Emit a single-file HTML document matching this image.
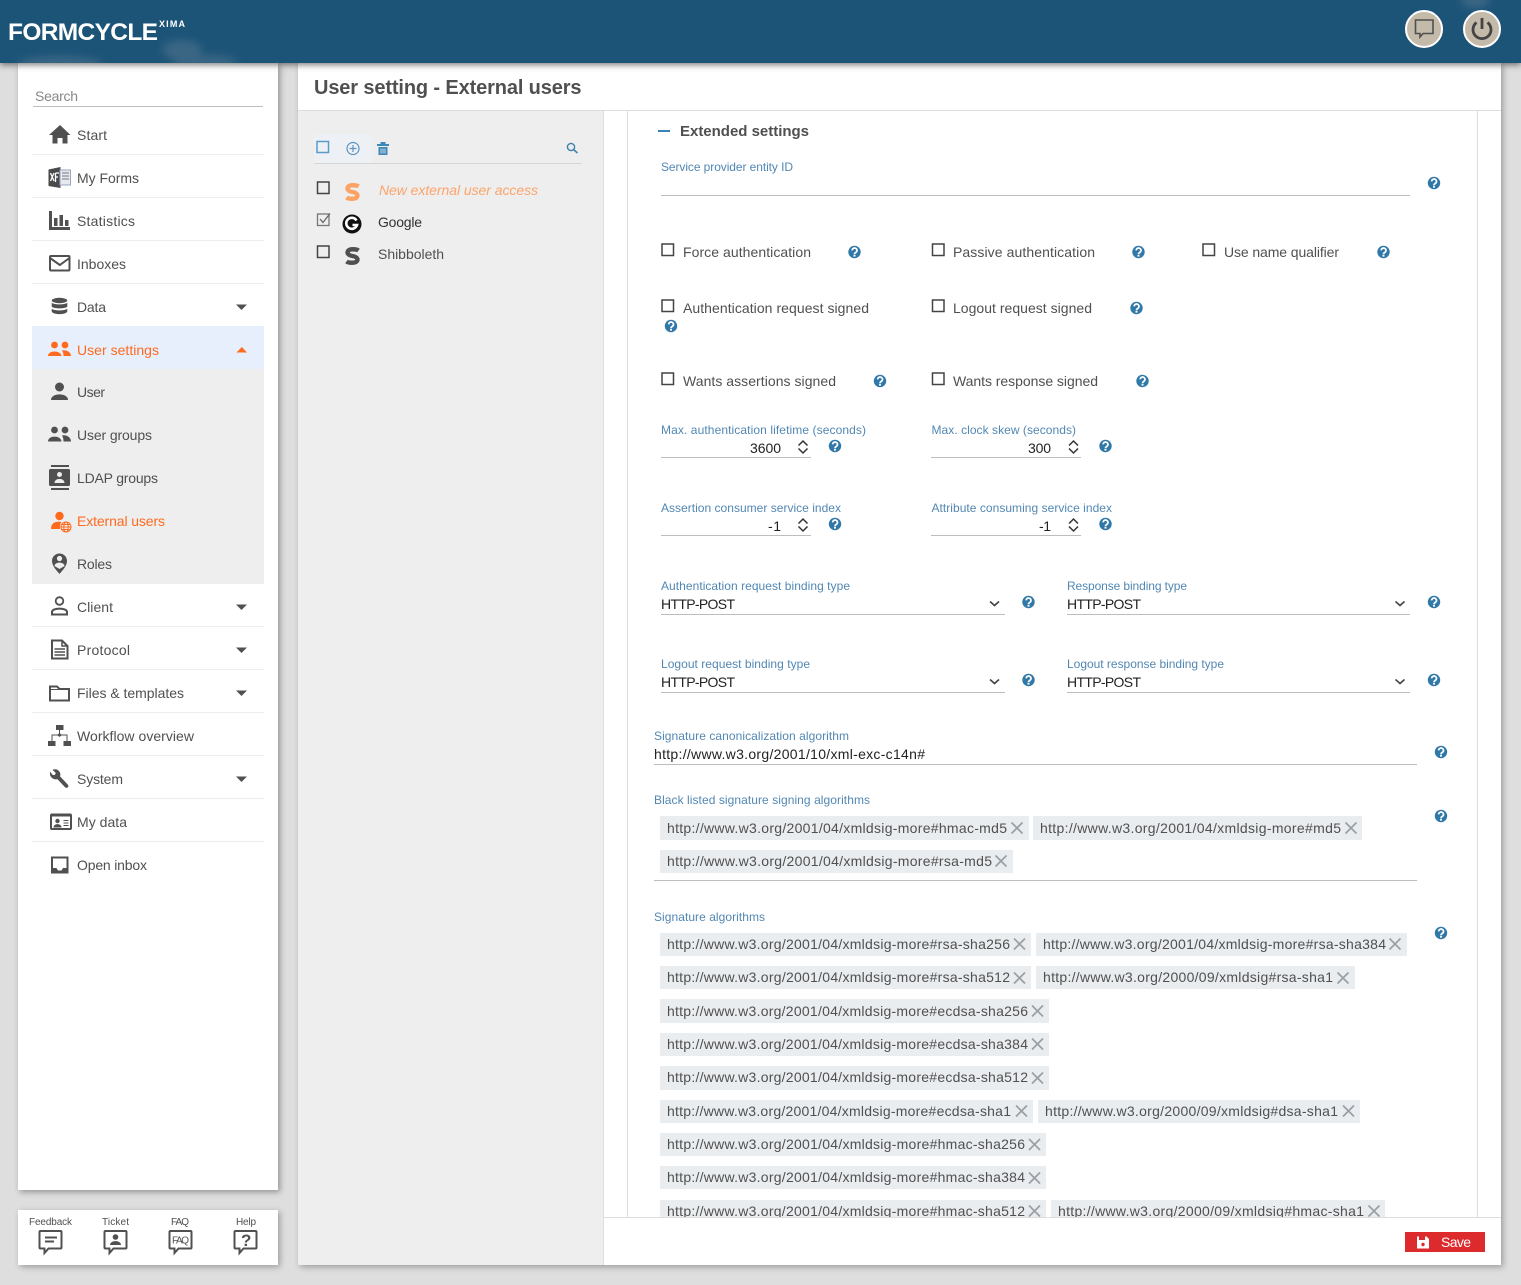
<!DOCTYPE html>
<html lang="en"><head><meta charset="utf-8"><title>User setting - External users</title>
<style>
html,body{margin:0;padding:0;width:1521px;height:1285px;overflow:hidden;background:#dedede}
.b{position:absolute}
svg{position:absolute;left:0;top:0}
text{font-family:"Liberation Sans",Arial,sans-serif;font-size:14px;fill:#505050}
.l{font-size:12px;fill:#5287b3}
.v{fill:#222}
.o{fill:#ff6a1f}
.chip{fill:#eaedf0}
.x{stroke:#98a0a6;stroke-width:1.7;fill:none}
.cb{fill:none;stroke:#444;stroke-width:1.5}
.sp{fill:none;stroke:#333;stroke-width:1.5}
.ln{fill:#bdbdbd}
.sep{fill:#ececec}
.ic{fill:#505050}
.is{fill:none;stroke:#505050;stroke-width:2}
.s10{font-size:10px}
</style></head><body>
<div class="b" style="left:18px;top:63px;width:260px;height:1127px;background:#fff;box-shadow:2px 2px 6px rgba(0,0,0,.35)"></div>
<div class="b" style="left:18px;top:1210px;width:260px;height:55px;background:#fff;box-shadow:2px 2px 6px rgba(0,0,0,.3)"></div>
<div class="b" style="left:298px;top:63px;width:1203px;height:1202px;background:#fff;box-shadow:2px 2px 6px rgba(0,0,0,.3)"></div>
<div class="b" style="left:0;top:0;width:1521px;height:63px;background:#1c5478;box-shadow:0 2px 6px rgba(0,0,0,.5)"></div>
<svg width="1521" height="1285" viewBox="0 0 1521 1285" xmlns="http://www.w3.org/2000/svg">
<defs>
<filter id="bl" x="-50%" y="-50%" width="200%" height="200%"><feGaussianBlur stdDeviation="4"/></filter>
<clipPath id="hc"><rect width="1521" height="63"/></clipPath>
<g id="h"><circle r="6.2" fill="#2f78a8"/><path d="M-2.3-1.6a2.4 2.3 0 1 1 3.7 1.9C.5.9 0 1.2 0 2.1" fill="none" stroke="#fff" stroke-width="1.7"/><rect x="-1" y="2.8" width="2" height="1.8" fill="#fff"/></g>
<path id="sp" d="M-4.500-2 0-6.500 4.500-2M-4.500 1 0 5.500 4.500 1" class="sp"/>
<path id="cv" d="M-4.500-2 0 2 4.500-2" fill="none" stroke="#444" stroke-width="1.6"/>
<path id="xx" d="M-5.500-5.500 5.500 5.500M5.500-5.500-5.500 5.500" class="x"/>
<path id="tr" d="M-5.500-2.500H5.500L0 3Z" fill="#505050"/>
<path id="bub" d="M-10-.5H10a1 1 0 0 1 1 1V16a1 1 0 0 1-1 1H-2L-6 21.500V17H-10a1 1 0 0 1-1-1V.5a1 1 0 0 1 1-1Z" fill="none" stroke="#505050" stroke-width="2"/>
<path id="ss" d="M6-5.500C4-7-3-7.500-4.500-5-6-2.500-3.500-.5 0 0 3.500 .5 6 2.500 4.500 5 3 7.500-4 7-6 5.500" fill="none" stroke-width="4.400"/>
</defs>

<!-- header -->
<g clip-path="url(#hc)"><g filter="url(#bl)" fill="#a5a5ad" opacity=".22"><ellipse cx="60" cy="64" rx="42" ry="8"/><ellipse cx="182" cy="50" rx="20" ry="10"/><ellipse cx="205" cy="62" rx="32" ry="7"/><ellipse cx="1475" cy="0" rx="15" ry="8"/></g></g>
<text x="8" y="40" textLength="150" style="font-size:24.5px;fill:#fff;font-weight:700">FORMCYCLE</text>
<text x="159" y="27" textLength="26" style="font-size:9px;fill:#fff;font-weight:700">XIMA</text>
<circle cx="1424" cy="29" r="18" fill="#c3baa9" stroke="#fff" stroke-width="2"/>
<path d="M1415.500 20H1433V33.500H1423L1420 37V33.500H1415.500Z" fill="none" stroke="#505050" stroke-width="1.600"/>
<circle cx="1482" cy="29" r="18" fill="#c3baa9" stroke="#fff" stroke-width="2"/>
<path d="M1476.500 22.500a9 9 0 1 0 11 0M1482 18V29" fill="none" stroke="#444" stroke-width="2.800"/>

<!-- sidebar -->
<text x="35" y="101" textLength="43" style="fill:#888">Search</text>
<rect x="33" y="106" width="230" height="1" class="ln"/>
<rect x="32" y="154" width="232" height="1" class="sep"/><rect x="32" y="197" width="232" height="1" class="sep"/><rect x="32" y="240" width="232" height="1" class="sep"/><rect x="32" y="283" width="232" height="1" class="sep"/>
<rect x="32" y="326" width="232" height="43" fill="#e8effc"/>
<rect x="32" y="369" width="232" height="215" fill="#eee"/>
<rect x="32" y="626" width="232" height="1" class="sep"/><rect x="32" y="669" width="232" height="1" class="sep"/><rect x="32" y="712" width="232" height="1" class="sep"/><rect x="32" y="755" width="232" height="1" class="sep"/><rect x="32" y="798" width="232" height="1" class="sep"/><rect x="32" y="841" width="232" height="1" class="sep"/>

<text x="77" y="140" textLength="30">Start</text>
<text x="77" y="183" textLength="62">My Forms</text>
<text x="77" y="226" textLength="58">Statistics</text>
<text x="77" y="269" textLength="49">Inboxes</text>
<text x="77" y="312" textLength="29">Data</text>
<text x="77" y="355" textLength="82" class="o">User settings</text>
<text x="77" y="397" textLength="28">User</text>
<text x="77" y="440" textLength="75">User groups</text>
<text x="77" y="483" textLength="81">LDAP groups</text>
<text x="77" y="526" textLength="88" class="o">External users</text>
<text x="77" y="569" textLength="35">Roles</text>
<text x="77" y="612" textLength="36">Client</text>
<text x="77" y="655" textLength="53">Protocol</text>
<text x="77" y="698" textLength="107">Files &amp; templates</text>
<text x="77" y="741" textLength="117">Workflow overview</text>
<text x="77" y="784" textLength="46">System</text>
<text x="77" y="827" textLength="50">My data</text>
<text x="77" y="870" textLength="70">Open inbox</text>

<use href="#tr" x="241.500" y="307"/><use href="#tr" x="241.500" y="607"/><use href="#tr" x="241.500" y="650"/><use href="#tr" x="241.500" y="693"/><use href="#tr" x="241.500" y="779"/>
<path d="M236.500 352.500H247L241.800 347Z" fill="#ff6a1f"/>

<!-- home -->
<path d="M49 135 60 125 70.500 135H67.500V143.500H62.500V138H57.500V143.500H52.500V135Z" class="ic"/>
<!-- my forms -->
<path d="M48.500 169.500 60.500 167V188L48.500 186Z" fill="#4a4a4a"/><rect x="60" y="170" width="10.500" height="15" fill="#e6e9f0" stroke="#9aa6c0"/><path d="M62 173H69M62 176H69M62 179H69" stroke="#777"/><path d="M50.500 173 54 181M54 173 50.500 181M55.500 173V182M55.500 173H59M55.500 177H58" stroke="#fff" stroke-width="1.300" fill="none"/>
<!-- stats -->
<path d="M49 211H52V227H70V230H49Z" class="ic"/><rect x="54" y="218" width="3.500" height="8" class="ic"/><rect x="59.500" y="215" width="3.500" height="11" class="ic"/><rect x="65" y="220" width="3.500" height="6" class="ic"/>
<!-- inbox -->
<rect x="50" y="256" width="19.500" height="14.500" rx="1" class="is"/><path d="M50 258 59.800 265 69.500 258" class="is"/>
<!-- data -->
<g class="ic"><ellipse cx="59.500" cy="300.500" rx="7.800" ry="2.700"/><path d="M51.700 302.500C53 305 66 305 67.300 302.500V306.500C66 309 53 309 51.700 306.500Z"/><path d="M51.700 308.500C53 311 66 311 67.300 308.500V311.500C66 315 53 315 51.700 311.500Z"/></g>
<!-- user settings -->
<g fill="#ff6a1f"><circle cx="54.500" cy="345" r="3.400"/><circle cx="65" cy="345" r="3.400"/><path d="M48 356C48 350 61 350 61.500 356ZM62 350.500C66 349.500 71 352 71 356H63.500C63.500 353.500 63 352 62 350.500Z"/></g>
<!-- user -->
<g class="ic"><circle cx="59.500" cy="387" r="4.500"/><path d="M51 400C51 392.500 68 392.500 68 400Z"/></g>
<!-- groups -->
<g class="ic"><circle cx="54.500" cy="430" r="3.400"/><circle cx="65" cy="430" r="3.400"/><path d="M48 441.500C48 435 61 435 61.500 441.500ZM62 435.500C66 434.500 71 437 71 441.500H63.500C63.500 439 63 437 62 435.500Z"/></g>
<!-- ldap -->
<rect x="51" y="465" width="18" height="2" class="ic"/><rect x="51" y="488" width="18" height="2" class="ic"/><rect x="49" y="469" width="21" height="17" rx="1.500" class="ic"/><circle cx="59.500" cy="474.500" r="2.500" fill="#eee"/><path d="M54.500 483C54.500 477.500 64.500 477.500 64.500 483Z" fill="#eee"/>
<!-- external -->
<g fill="#ff6a1f"><circle cx="59.500" cy="516" r="4.200"/><path d="M51 529C51 522 57 521 61.500 522 60 524 60 526 60 529Z"/></g><g fill="none" stroke="#ff6a1f" stroke-width="1"><circle cx="66" cy="527" r="5"/><ellipse cx="66" cy="527" rx="2.200" ry="5"/><path d="M61 527H71M61.800 524.500H70.200M61.800 529.500H70.200"/></g>
<!-- roles -->
<path d="M59.500 553.500C64 553.500 67 557 67 561 67 566 62 571 59.500 574 57 571 52 566 52 561 52 557 55 553.500 59.500 553.500Z" class="ic"/><circle cx="59.500" cy="558.500" r="2.600" fill="#eee"/><path d="M54.500 566C54.500 561.500 64.500 561.500 64.500 566L59.500 569Z" fill="#eee"/>
<!-- client -->
<circle cx="59.500" cy="601" r="3.800" class="is" style="stroke-width:1.800"/><path d="M52 614.500V612C52 607.500 67 607.500 67 612V614.500Z" class="is"/>
<!-- protocol -->
<path d="M52 640.500H62L67.500 646V658.500H52Z" class="is"/><path d="M62 640.500V646H67.500" class="is" style="stroke-width:1.500"/><path d="M54.500 649H65M54.500 652H65M54.500 655H65" stroke="#505050" stroke-width="1.500"/>
<!-- files -->
<path d="M50 700.500V686.500H57L59.500 689H69V700.500Z" class="is"/><path d="M50 689.500H59" stroke="#505050"/>
<!-- workflow -->
<g class="ic"><rect x="56" y="725" width="7.500" height="5"/><rect x="48" y="741" width="7.500" height="5"/><rect x="63.500" y="741" width="7.500" height="5"/><path d="M59 730H60V734.500H67.500V741H66.500V735.500H52.500V741H51.500V734.500H59Z"/><path d="M59.500 733 62 735 59.500 737 57 735Z"/></g>
<!-- system wrench -->
<path d="M50.500 773C50 776.500 53.500 780 57.500 778.500L65.500 787C67 788 68.500 786.500 67.500 785L59.500 776.500C61 772.500 57.500 769 53.500 770L56.500 773 55 775.500 52.500 775.500Z" class="ic" stroke="#505050"/>
<!-- my data -->
<rect x="51" y="814.500" width="20" height="14.500" rx="1" class="is"/><rect x="51" y="813.500" width="20" height="3" class="ic"/><circle cx="57.500" cy="821" r="2.200" class="ic"/><path d="M53.500 827.500C53.500 823 61.500 823 61.500 827.500Z" class="ic"/><path d="M63.500 820.500H68.500M63.500 823H68.500M63.500 825.500H68.500" stroke="#505050"/>
<!-- open inbox -->
<path d="M51 856.500H68.500V873.500H51Z" class="ic"/><path d="M53 858.500H66.500V868H63L61.500 870.500H58L56.500 868H53Z" fill="#fff"/>

<!-- bottom -->
<text x="29" y="1225" textLength="43" class="s10">Feedback</text>
<text x="102" y="1225" textLength="27" class="s10">Ticket</text>
<text x="171" y="1225" textLength="18" class="s10">FAQ</text>
<text x="236" y="1225" textLength="20" class="s10">Help</text>
<use href="#bub" x="50.500" y="1231.500"/><use href="#bub" x="115.500" y="1231.500"/><use href="#bub" x="180.500" y="1231.500"/><use href="#bub" x="245.500" y="1231.500"/>
<path d="M45 1237.500H57M45 1241.500H54" stroke="#505050" stroke-width="2"/>
<circle cx="115.500" cy="1237" r="2.800" class="ic"/><path d="M110 1245C110 1239.800 121 1239.800 121 1245Z" class="ic"/>
<text x="172" y="1243.500" textLength="17" style="font-size:10px">FAQ</text>
<text x="241" y="1246" textLength="9" style="font-size:17px;font-weight:700">?</text>

<!-- main -->
<text x="314" y="94" textLength="267.500" style="font-size:20px;font-weight:700">User setting - External users</text>
<rect x="298" y="110" width="1203" height="1" fill="#ddd"/>
<rect x="298" y="111" width="305" height="1154" fill="#eee"/>
<rect x="603" y="111" width="1" height="1154" fill="#ddd"/>
<rect x="627" y="111" width="1" height="1106" fill="#ddd"/>
<rect x="1477" y="111" width="1" height="1106" fill="#ddd"/>

<!-- list panel -->
<rect x="314" y="134" width="58" height="29" fill="#edf1f5"/>
<rect x="317" y="141.500" width="11.500" height="11" fill="none" stroke="#5d9aca" stroke-width="1.500"/>
<circle cx="353" cy="148.500" r="6" fill="none" stroke="#5d94c0" stroke-width="1.200"/><path d="M349.500 148.500H356.500M353 145V152" stroke="#5d94c0" stroke-width="1.200"/>
<path d="M377 144H389V146H377ZM380.500 144V142H385.500V144ZM378.500 147H387.500V155H378.500Z" fill="#3d86b8"/><path d="M381 148.500V153.500M383 148.500V153.500M385 148.500V153.500" stroke="#e6edf2" stroke-width=".8"/>
<circle cx="571" cy="147" r="3.600" fill="none" stroke="#3d80ad" stroke-width="1.400"/><path d="M573.800 149.800 577.500 153" stroke="#3d80ad" stroke-width="1.600"/>
<rect x="314" y="163" width="268" height="1" fill="#d5d5d5"/>
<rect x="317.500" y="182" width="11.500" height="11.500" class="cb"/>
<rect x="317.500" y="214" width="11.500" height="11.500" fill="none" stroke="#777" stroke-width="1.300"/><path d="M320 219 323 222.500 330 213.500" fill="none" stroke="#666" stroke-width="1.300"/>
<rect x="317.500" y="246" width="11.500" height="11.500" class="cb"/>
<use href="#ss" x="352.500" y="192" stroke="#fca262"/>
<circle cx="352" cy="224" r="9.500" fill="#111"/><path d="M356.500 220.500A5.500 5.500 0 1 0 357 225H352.500" fill="none" stroke="#fff" stroke-width="2.600"/>
<use href="#ss" x="352.500" y="256" stroke="#505050"/>
<text x="379" y="195" textLength="159" style="font-style:italic;fill:#fca46b">New external user access</text>
<text x="378" y="227" textLength="44" style="fill:#333">Google</text>
<text x="378" y="259" textLength="66">Shibboleth</text>

<!-- form -->
<rect x="658" y="130" width="12" height="2" fill="#3a84b5"/>
<text x="680" y="136" textLength="129" style="font-size:15px;font-weight:700">Extended settings</text>
<text x="661" y="171" textLength="132" class="l">Service provider entity ID</text>
<rect x="661" y="195" width="749" height="1" class="ln"/><use href="#h" x="1434" y="183"/>

<rect x="662" y="244" width="11.500" height="11.500" class="cb"/><text x="683" y="257" textLength="128">Force authentication</text><use href="#h" x="854.500" y="252"/>
<rect x="932.500" y="244" width="11.500" height="11.500" class="cb"/><text x="953" y="257" textLength="142">Passive authentication</text><use href="#h" x="1138.500" y="252"/>
<rect x="1203" y="244" width="11.500" height="11.500" class="cb"/><text x="1224" y="257" textLength="115">Use name qualifier</text><use href="#h" x="1383.500" y="252"/>

<rect x="662" y="300" width="11.500" height="11.500" class="cb"/><text x="683" y="313" textLength="186">Authentication request signed</text><use href="#h" x="671" y="326"/>
<rect x="932.500" y="300" width="11.500" height="11.500" class="cb"/><text x="953" y="313" textLength="139">Logout request signed</text><use href="#h" x="1136.500" y="308"/>

<rect x="662" y="373" width="11.500" height="11.500" class="cb"/><text x="683" y="386" textLength="153">Wants assertions signed</text><use href="#h" x="880" y="381"/>
<rect x="932.500" y="373" width="11.500" height="11.500" class="cb"/><text x="953" y="386" textLength="145">Wants response signed</text><use href="#h" x="1142.500" y="381"/>

<text x="661" y="434" textLength="205" class="l">Max. authentication lifetime (seconds)</text>
<text x="931.500" y="434" textLength="144.500" class="l">Max. clock skew (seconds)</text>
<text x="750" y="453" textLength="31" class="v">3600</text><text x="1028" y="453" textLength="23" class="v">300</text>
<use href="#sp" x="803" y="447.500"/><use href="#sp" x="1073.500" y="447.500"/>
<rect x="661" y="457" width="150" height="1" class="ln"/><rect x="931" y="457" width="150" height="1" class="ln"/>
<use href="#h" x="835" y="446"/><use href="#h" x="1105.500" y="446"/>

<text x="661" y="512" textLength="180" class="l">Assertion consumer service index</text>
<text x="931.500" y="512" textLength="180.500" class="l">Attribute consuming service index</text>
<text x="768" y="531" textLength="13" class="v">-1</text><text x="1039" y="531" textLength="12" class="v">-1</text>
<use href="#sp" x="803" y="525.500"/><use href="#sp" x="1073.500" y="525.500"/>
<rect x="661" y="535" width="150" height="1" class="ln"/><rect x="931" y="535" width="150" height="1" class="ln"/>
<use href="#h" x="835" y="524"/><use href="#h" x="1105.500" y="524"/>

<text x="661" y="590" textLength="189" class="l">Authentication request binding type</text>
<text x="1067" y="590" textLength="120" class="l">Response binding type</text>
<text x="661" y="609" textLength="74" class="v">HTTP-POST</text><text x="1067" y="609" textLength="74" class="v">HTTP-POST</text>
<use href="#cv" x="994.500" y="603.500"/><use href="#cv" x="1400" y="603.500"/>
<rect x="661" y="614" width="344" height="1" class="ln"/><rect x="1067" y="614" width="343" height="1" class="ln"/>
<use href="#h" x="1028.500" y="602"/><use href="#h" x="1434" y="602"/>

<text x="661" y="668" textLength="149" class="l">Logout request binding type</text>
<text x="1067" y="668" textLength="157" class="l">Logout response binding type</text>
<text x="661" y="687" textLength="74" class="v">HTTP-POST</text><text x="1067" y="687" textLength="74" class="v">HTTP-POST</text>
<use href="#cv" x="994.500" y="681.500"/><use href="#cv" x="1400" y="681.500"/>
<rect x="661" y="692" width="344" height="1" class="ln"/><rect x="1067" y="692" width="343" height="1" class="ln"/>
<use href="#h" x="1028.500" y="680"/><use href="#h" x="1434" y="680"/>

<text x="654" y="740" textLength="195" class="l">Signature canonicalization algorithm</text>
<text x="654" y="759" textLength="271" class="v">http://www.w3.org/2001/10/xml-exc-c14n#</text>
<rect x="654" y="764" width="763" height="1" class="ln"/><use href="#h" x="1441" y="752"/>

<text x="654" y="804" textLength="216" class="l">Black listed signature signing algorithms</text>
<use href="#h" x="1441" y="816"/>
<rect x="660" y="816" width="369" height="24" class="chip"/><rect x="1033" y="816" width="329" height="24" class="chip"/><rect x="660" y="850" width="353" height="23" class="chip"/>
<text x="667" y="833" textLength="340">http://www.w3.org/2001/04/xmldsig-more#hmac-md5</text><use href="#xx" x="1017" y="828"/>
<text x="1040" y="833" textLength="301">http://www.w3.org/2001/04/xmldsig-more#md5</text><use href="#xx" x="1351" y="828"/>
<text x="667" y="866" textLength="325">http://www.w3.org/2001/04/xmldsig-more#rsa-md5</text><use href="#xx" x="1001" y="861"/>
<rect x="654" y="880" width="763" height="1" class="ln"/>

<text x="654" y="921" textLength="111" class="l">Signature algorithms</text>
<use href="#h" x="1441" y="933"/>
<rect x="660" y="933" width="371" height="23" class="chip"/><rect x="1036" y="933" width="371" height="23" class="chip"/>
<rect x="660" y="966" width="371" height="23" class="chip"/><rect x="1036" y="966" width="319" height="23" class="chip"/>
<rect x="660" y="999" width="389" height="24" class="chip"/>
<rect x="660" y="1033" width="389" height="23" class="chip"/>
<rect x="660" y="1066" width="389" height="24" class="chip"/>
<rect x="660" y="1100" width="373" height="23" class="chip"/><rect x="1038" y="1100" width="322" height="23" class="chip"/>
<rect x="660" y="1133" width="386" height="23" class="chip"/>
<rect x="660" y="1166" width="386" height="23" class="chip"/>
<rect x="660" y="1200" width="386" height="23" class="chip"/><rect x="1051" y="1200" width="334" height="23" class="chip"/>

<text x="667" y="949" textLength="343">http://www.w3.org/2001/04/xmldsig-more#rsa-sha256</text><use href="#xx" x="1019.500" y="944"/>
<text x="1043" y="949" textLength="343">http://www.w3.org/2001/04/xmldsig-more#rsa-sha384</text><use href="#xx" x="1395" y="944"/>
<text x="667" y="982" textLength="343">http://www.w3.org/2001/04/xmldsig-more#rsa-sha512</text><use href="#xx" x="1019.500" y="978"/>
<text x="1043" y="982" textLength="290">http://www.w3.org/2000/09/xmldsig#rsa-sha1</text><use href="#xx" x="1343" y="978"/>
<text x="667" y="1016" textLength="361">http://www.w3.org/2001/04/xmldsig-more#ecdsa-sha256</text><use href="#xx" x="1037.500" y="1011"/>
<text x="667" y="1049" textLength="361">http://www.w3.org/2001/04/xmldsig-more#ecdsa-sha384</text><use href="#xx" x="1037.500" y="1044"/>
<text x="667" y="1082" textLength="361">http://www.w3.org/2001/04/xmldsig-more#ecdsa-sha512</text><use href="#xx" x="1037.500" y="1078"/>
<text x="667" y="1116" textLength="344">http://www.w3.org/2001/04/xmldsig-more#ecdsa-sha1</text><use href="#xx" x="1021.500" y="1111"/>
<text x="1045" y="1116" textLength="293">http://www.w3.org/2000/09/xmldsig#dsa-sha1</text><use href="#xx" x="1348.500" y="1111"/>
<text x="667" y="1149" textLength="358">http://www.w3.org/2001/04/xmldsig-more#hmac-sha256</text><use href="#xx" x="1034.500" y="1144.500"/>
<text x="667" y="1182" textLength="358">http://www.w3.org/2001/04/xmldsig-more#hmac-sha384</text><use href="#xx" x="1034.500" y="1178"/>
<text x="667" y="1216" textLength="358">http://www.w3.org/2001/04/xmldsig-more#hmac-sha512</text><use href="#xx" x="1034.500" y="1211"/>
<text x="1058" y="1216" textLength="306">http://www.w3.org/2000/09/xmldsig#hmac-sha1</text><use href="#xx" x="1374" y="1211"/>

<!-- footer -->
<rect x="604" y="1217" width="897" height="48" fill="#fff"/>
<rect x="604" y="1217" width="897" height="1" fill="#ddd"/>
<rect x="1405" y="1232" width="80" height="20" fill="#dd2a2c"/>
<path d="M1417 1236.500H1426.500L1429 1239V1248.500H1417Z" fill="#fff"/><rect x="1419" y="1236.500" width="6" height="3.500" fill="#dd2a2c"/><circle cx="1423" cy="1244.500" r="1.700" fill="#dd2a2c"/>
<text x="1441" y="1247" textLength="30" style="fill:#fff">Save</text>
</svg>
</body></html>
